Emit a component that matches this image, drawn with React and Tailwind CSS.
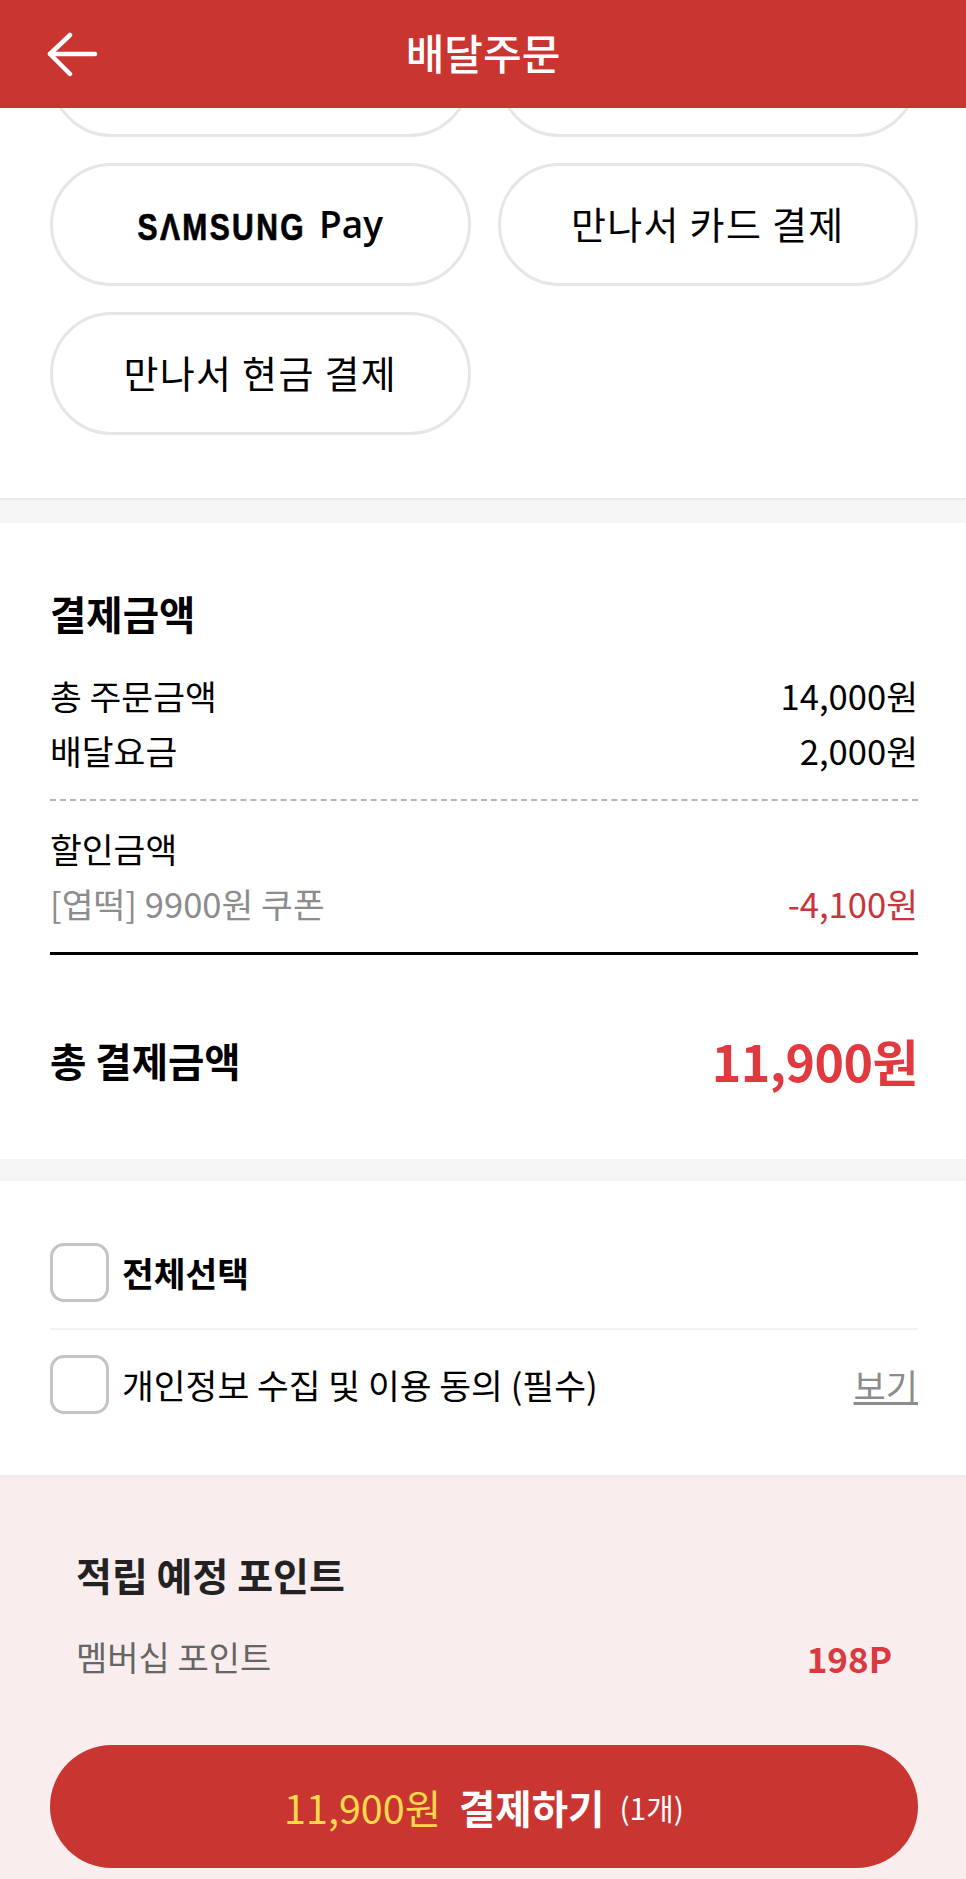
import React from 'react';

function PayOption({ children }) {
  return (
    <div className="h-[123px] pb-[4px] rounded-full border-[3px] border-[#e6e6e6] bg-white flex items-center justify-center text-[38px] text-black tracking-[0.035em]">
      {children}
    </div>
  );
}

function PriceRow({ label, value, labelClass = 'text-black', valueClass = 'text-black' }) {
  return (
    <div className="h-[55px] pb-[4px] flex items-center justify-between text-[34.6px] leading-none">
      <span className={labelClass}>{label}</span>
      <span className={valueClass}>{value}</span>
    </div>
  );
}

function CheckBox() {
  return <div className="w-[59px] h-[59px] rounded-[14px] border-[3px] border-[#c4c4c4] bg-white shrink-0" />;
}

export default function App() {
  return (
    <div className="w-[966px] h-[1879px] overflow-hidden bg-white flex flex-col font-['Noto_Sans_CJK_KR',sans-serif]">
      <header className="relative z-10 h-[108px] pb-[4px] shrink-0 bg-[#c93530] flex items-center justify-center">
        <svg className="absolute left-[46px] top-[32px]" width="56" height="46" viewBox="0 0 56 46" fill="none" stroke="#fff" strokeWidth="4.5" strokeLinecap="round" strokeLinejoin="round">
          <path d="M4 22H49" />
          <path d="M24 3L4 22L24 42" />
        </svg>
        <h1 className="text-[42px] font-medium text-white leading-none">배달주문</h1>
      </header>

      {/* payment methods, list is scrolled so first row sits under the header */}
      <section className="-mt-[94px] pl-[50px] pr-[48px] pb-[63px] border-b-2 border-[#ebebeb]">
        <div className="grid grid-cols-2 gap-x-[27px] gap-y-[26px]">
          <PayOption />
          <PayOption />
          <PayOption>
            <span className="mt-[3px] flex items-baseline tracking-normal">
              <span className="font-['Liberation_Sans',sans-serif] font-bold text-[30px] tracking-[0.08em] scale-y-[1.2] [-webkit-text-stroke:0.6px_black]">SΛMSUNG</span>
              <span className="ml-[13px] font-['Open_Sans',sans-serif] font-semibold text-[37px]">Pay</span>
            </span>
          </PayOption>
          <PayOption>만나서 카드 결제</PayOption>
          <PayOption>만나서 현금 결제</PayOption>
        </div>
      </section>

      <div className="h-[23px] bg-[#f5f5f5] shrink-0" />

      <section className="pl-[50px] pr-[48px] pt-[67px] pb-[41px]">
        <h2 className="h-[50px] pb-[4px] flex items-center text-[39.5px] font-bold text-black leading-none">결제금액</h2>
        <div className="mt-[30px]">
          <PriceRow label="총 주문금액" value="14,000원" />
          <PriceRow label="배달요금" value="2,000원" />
        </div>
        <div className="mt-[19px] border-t-2 border-dashed border-[#b5b5b5]" />
        <div className="mt-[22px]">
          <PriceRow label="할인금액" />
          <PriceRow label="[엽떡] 9900원 쿠폰" value="-4,100원" labelClass="text-[#8c8c8c]" valueClass="text-[#c9353a]" />
        </div>
        <div className="mt-[19px] border-t-[3px] border-black" />
        <div className="mt-[53px] h-[110px] pb-[6px] flex items-center justify-between">
          <span className="text-[39.5px] font-bold text-black leading-none">총 결제금액</span>
          <span className="text-[50px] font-bold text-[#e0393f] leading-none tracking-[-0.01em]">11,900원</span>
        </div>
      </section>

      <div className="h-[22px] bg-[#f5f5f5] shrink-0" />

      <section className="pl-[50px] pr-[48px] pt-[62px] pb-[61px] border-b-2 border-[#ebebeb]">
        <div className="flex items-center gap-[13px]">
          <CheckBox />
          <span className="text-[34.5px] font-bold text-black leading-none">전체선택</span>
        </div>
        <div className="mt-[26px] mb-[25px] border-t-2 border-[#f2f2f2]" />
        <div className="flex items-center gap-[13px]">
          <CheckBox />
          <span className="text-[34.6px] text-black leading-none">개인정보 수집 및 이용 동의 (필수)</span>
          <span className="ml-auto text-[35px] text-[#8c8c8c] underline leading-none">보기</span>
        </div>
      </section>

      <section className="flex-1 bg-[#f9edee]">
        <div className="pl-[76px] pr-[74px] pt-[72px]">
          <h2 className="h-[50px] flex items-center text-[39px] font-bold text-[#222] leading-none">적립 예정 포인트</h2>
          <div className="mt-[33px] h-[50px] flex items-center justify-between text-[34px] leading-none">
            <span className="text-[#666]">멤버십 포인트</span>
            <span className="text-[35px] font-bold text-[#d9393f]">198P</span>
          </div>
        </div>
        <div className="pl-[50px] pr-[48px] mt-[63px]">
          <div className="h-[123px] rounded-full bg-[#c93530] flex items-center justify-center">
            <span className="text-[39.5px] text-[#ffd84d] leading-none">11,900원</span>
            <span className="ml-[18px] text-[39.5px] font-bold text-white leading-none">결제하기</span>
            <span className="ml-[15px] text-[30px] text-white leading-none">(1개)</span>
          </div>
        </div>
      </section>
    </div>
  );
}
